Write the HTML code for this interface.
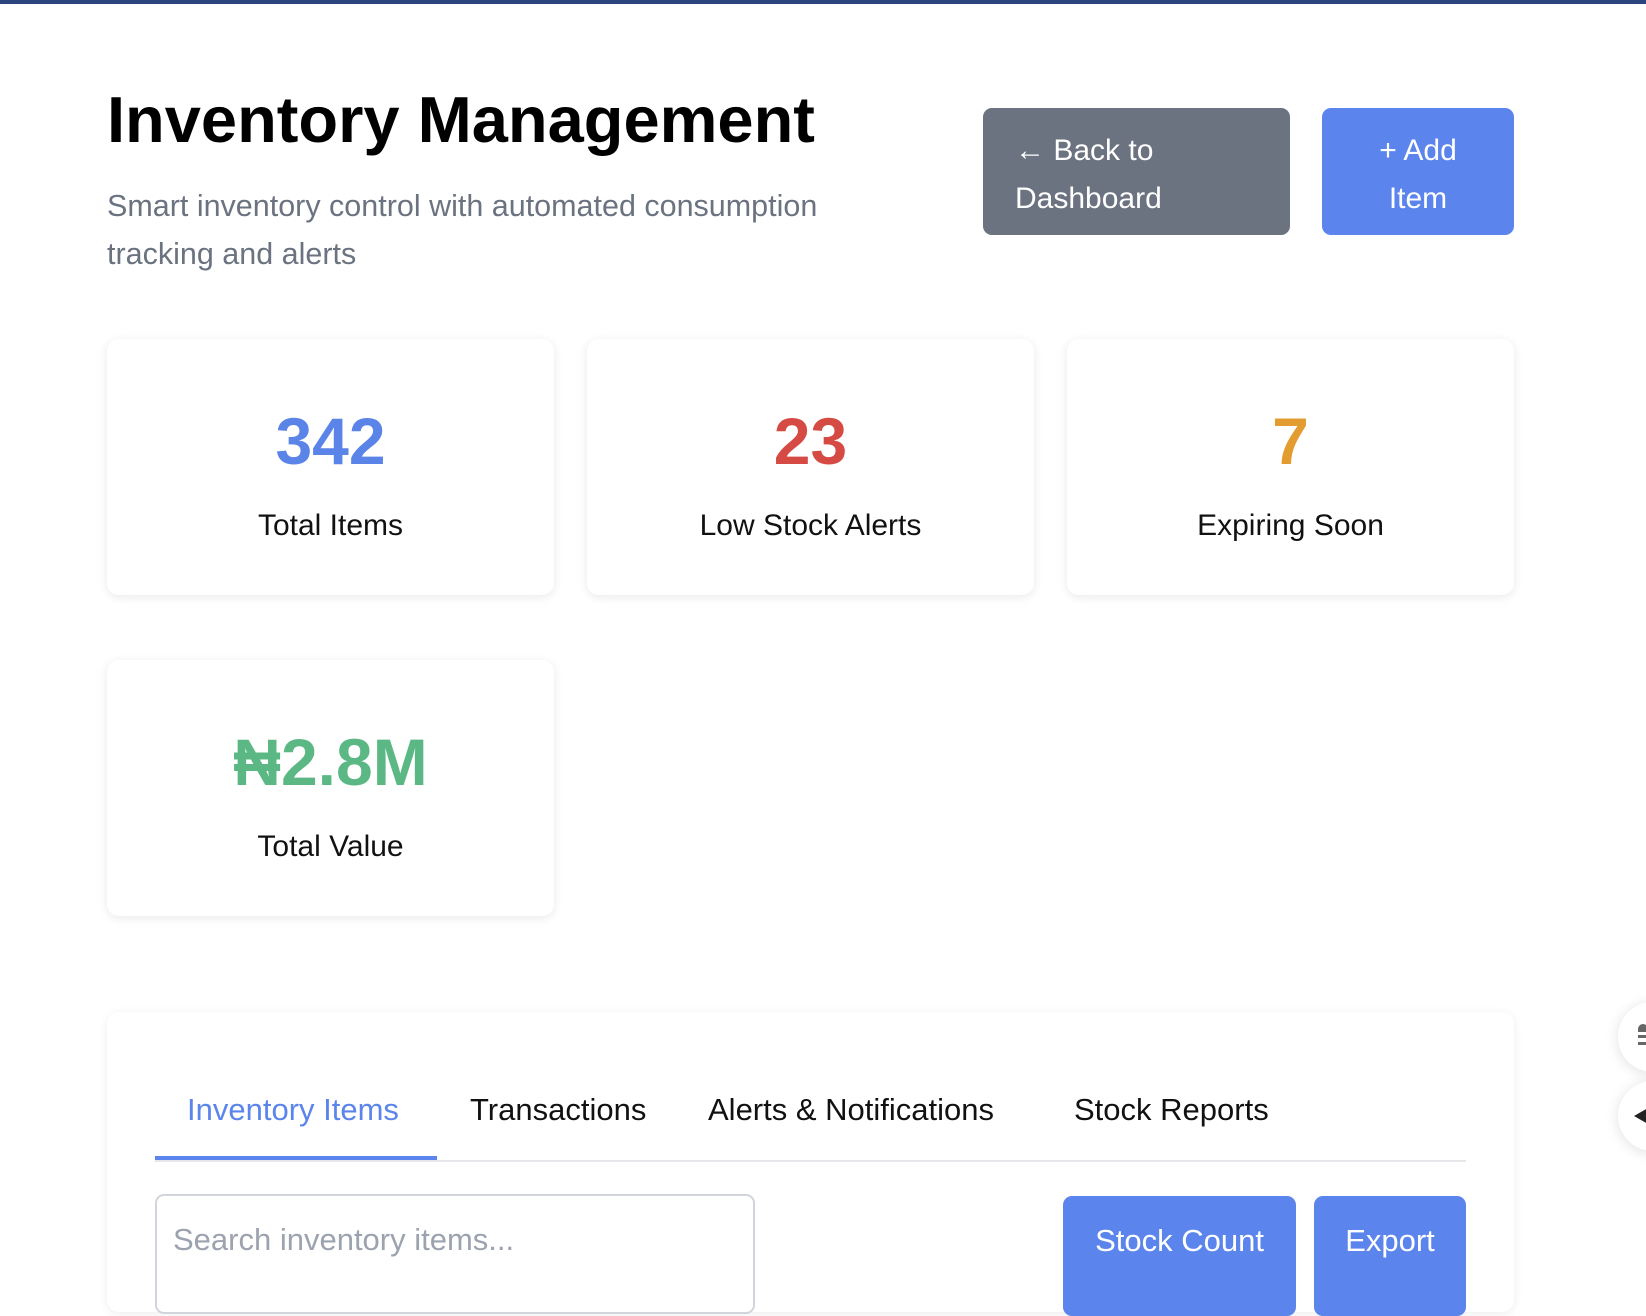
<!DOCTYPE html>
<html><head><meta charset="utf-8"><style>
*{box-sizing:border-box;margin:0;padding:0}
html,body{width:1646px;height:1270px;overflow:hidden;background:#fff;font-family:"Liberation Sans",sans-serif;color:#111}
.topbar{position:absolute;left:0;top:0;width:1646px;height:4px;background:#2a4580}
h1{position:absolute;left:107px;top:82px;font-size:65px;font-weight:bold;line-height:76px;color:#000}
.sub{position:absolute;left:107px;top:182px;width:800px;font-size:30.5px;line-height:48px;color:#6b7280}
.btn{position:absolute;border-radius:9px;color:#fff;font-size:30px;line-height:48px}
.back{left:983px;top:108px;width:307px;height:127px;background:#6b7280;padding:19px 32px}
.add{left:1322px;top:108px;width:192px;height:127px;background:#5b85ec;text-align:center;padding:19px 30px}
.card{position:absolute;width:447px;height:256px;border-radius:12px;background:#fff;box-shadow:0 2px 10px rgba(0,0,0,0.09);text-align:center}
.card .n{position:absolute;left:0;right:0;top:62px;font-size:66px;font-weight:bold;line-height:80px}
.card .l{position:absolute;left:0;right:0;top:167px;font-size:30px;line-height:40px;color:#111}
.panel{position:absolute;left:107px;top:1012px;width:1407px;height:300px;border-radius:12px;background:#fff;box-shadow:0 2px 10px rgba(0,0,0,0.07)}
.tab{position:absolute;top:1088px;font-size:31px;line-height:44px;color:#111}
.line{position:absolute;left:155px;top:1160px;width:1311px;height:2px;background:#e5e7eb}
.ul{position:absolute;left:155px;top:1156px;width:282px;height:4px;background:#5b85ec}
.search{position:absolute;left:155px;top:1194px;width:600px;height:120px;border:2px solid #d1d5db;border-radius:9px;font-size:31px;color:#9ca3af;padding:26px 16px}
.b2{position:absolute;top:1196px;height:120px;background:#5b85ec;border-radius:9px;color:#fff;font-size:31px;text-align:center;padding-top:27px}
.fc{position:absolute;left:1618px;width:70px;height:70px;border-radius:50%;background:#fff;box-shadow:0 2px 14px rgba(0,0,0,0.12)}
</style></head><body>
<div class="topbar"></div>
<h1>Inventory Management</h1>
<div class="sub">Smart inventory control with automated consumption tracking and alerts</div>
<div class="btn back">← Back to<br>Dashboard</div>
<div class="btn add">+ Add<br>Item</div>

<div class="card" style="left:107px;top:339px"><div class="n" style="color:#5a84e8">342</div><div class="l">Total Items</div></div>
<div class="card" style="left:587px;top:339px"><div class="n" style="color:#d64a44">23</div><div class="l">Low Stock Alerts</div></div>
<div class="card" style="left:1067px;top:339px"><div class="n" style="color:#e39c30">7</div><div class="l">Expiring Soon</div></div>
<div class="card" style="left:107px;top:660px"><div class="n" style="color:#5bb884">₦2.8M</div><div class="l">Total Value</div></div>

<div class="panel"></div>
<div class="tab" style="left:187px;color:#5b85ec">Inventory Items</div>
<div class="tab" style="left:470px">Transactions</div>
<div class="tab" style="left:708px">Alerts &amp; Notifications</div>
<div class="tab" style="left:1074px">Stock Reports</div>
<div class="line"></div><div class="ul"></div>
<div class="search">Search inventory items...</div>
<div class="b2" style="left:1063px;width:233px">Stock Count</div>
<div class="b2" style="left:1314px;width:152px">Export</div>

<div class="fc" style="top:1002px"><div style="position:absolute;left:20px;top:22px;width:10px;height:8px;border-radius:5px 5px 0 0;background:#666"></div><div style="position:absolute;left:20px;top:33px;width:14px;height:3px;background:#666"></div><div style="position:absolute;left:20px;top:40px;width:14px;height:3px;background:#666"></div></div>
<div class="fc" style="top:1081px"><div style="position:absolute;left:16px;top:27px;width:0;height:0;border-top:8px solid transparent;border-bottom:8px solid transparent;border-right:14px solid #222"></div></div>
</body></html>
